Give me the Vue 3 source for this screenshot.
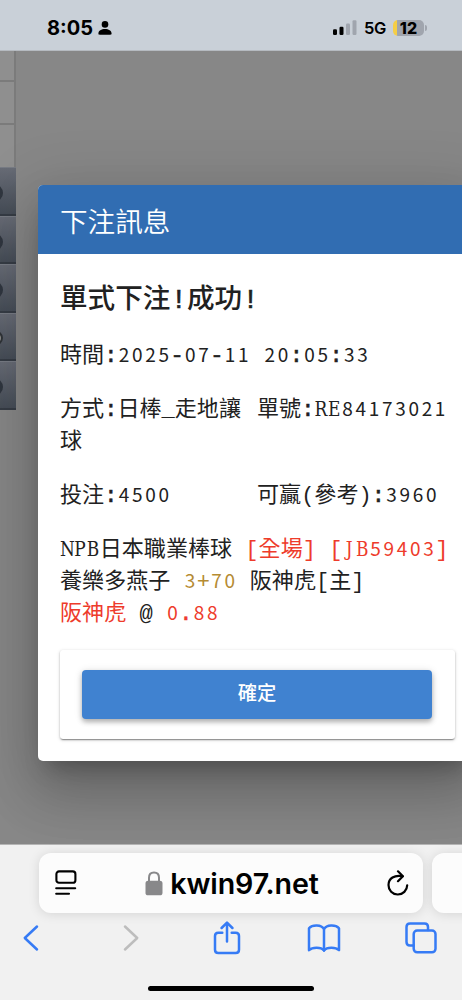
<script setup>
import { h } from 'vue'

const navItems = [0, 1, 2, 3, 4]

// Splits a string into runs so that digits, capitals and marks get their own face.
const Mono = (props) =>
  h('span', { class: 'mono' }, props.t.split(/(\d+|[A-Z]|[:.!-])/).filter(Boolean).map((part) => {
    if (/^\d/.test(part)) return h('span', { class: 'mono-digits' }, part)
    if (/^[A-Z]/.test(part)) return h('span', { class: 'mono-cap' }, part)
    if (/^[:.!-]/.test(part)) return h('span', { class: 'mono-mark' }, part)
    return part
  }))
Mono.props = ['t']
</script>

<template>
  <div class="screen">
    <header class="status">
      <div class="clock">
        <span>8:05</span>
        <svg width="14" height="14" viewBox="0 0 14 14"><circle cx="7" cy="3.4" r="3.3" /><path d="M0.4 12.6C0.4 9.6 3.4 8 7 8s6.6 1.6 6.6 4.6c0 .8-.5 1.2-1.3 1.2H1.700c-.8 0-1.3-.4-1.3-1.200z" /></svg>
      </div>
      <div class="signals">
        <svg class="bars" width="24" height="16" viewBox="0 0 24 16">
          <rect x="0" y="9.3" width="4" height="5.7" rx="1.2" /><rect x="6.5" y="6.8" width="4" height="8.2" rx="1.2" />
          <g fill="#a0a5ae"><rect x="13" y="3.5" width="4" height="11.5" rx="1.2" /><rect x="19.5" y="0.3" width="4" height="14.7" rx="1.2" /></g>
        </svg>
        <span class="net">5G</span>
        <span class="battery">12</span>
        <i class="nub"></i>
      </div>
    </header>

    <main class="page">
      <aside class="side">
        <div class="cell first"></div>
        <div class="cell"></div>
        <div class="cell"></div>
        <div v-for="n in navItems" :key="n" class="nav" :class="{ lit: n === 3 }"><i></i></div>
      </aside>

      <section class="dialog">
        <h1 class="title">下注訊息</h1>
        <div class="body">
          <h2><Mono t="單式下注!成功!" /></h2>
          <div class="row"><p><Mono t="時間:2025-07-11 20:05:33" /></p></div>
          <div class="row cols">
            <p><Mono t="方式:日棒_走地讓" /><Mono t="球" /></p>
            <p><Mono t="單號:RE84173021" /></p>
          </div>
          <div class="row cols">
            <p><Mono t="投注:4500" /></p>
            <p><Mono t="可贏(參考):3960" /></p>
          </div>
          <div class="row bet">
            <p><Mono t="NPB日本職業棒球 " /><Mono class="red" t="[全場] [JB59403]" /></p>
            <p><Mono t="養樂多燕子 " /><Mono class="gold" t="3+70" /><Mono t=" 阪神虎[主]" /></p>
            <p><Mono class="red" t="阪神虎" /><Mono t=" @ " /><Mono class="red" t="0.88" /></p>
          </div>
          <div class="card"><button>確定</button></div>
        </div>
      </section>
    </main>

    <footer class="browser">
      <div class="tabs">
        <div class="address">
          <svg class="reader" width="22" height="26" viewBox="0 0 22 26" fill="none" stroke="#000" stroke-width="2.1" stroke-linecap="round"><rect x="1.4" y="1.4" width="19" height="11.4" rx="2.6" /><path d="M1.2 18.2H20.2M1.2 23.7H14" /></svg>
          <div class="host">
            <svg width="18" height="25" viewBox="0 0 18 25"><rect x="0.5" y="9.8" width="17" height="14.5" rx="2.6" fill="#88888a" /><path d="M4 11V6.8C4 3.6 6 1.5 9 1.5s5 2.1 5 5.3V11" fill="none" stroke="#88888a" stroke-width="2" /></svg>
            <span>kwin97.net</span>
          </div>
          <svg class="reload" width="22" height="26" viewBox="0 0 22 26" fill="none" stroke="#000" stroke-width="2.2" stroke-linecap="round" stroke-linejoin="round"><path d="M15.500 6.200C7.500 4.500 1.500 8.500 1.500 15A9.300 9.300 0 0 0 20.200 15.300" /><path d="M11 1.300L15.900 6.200L11 11.200" /></svg>
        </div>
        <div class="next-tab"></div>
      </div>
      <nav class="tools">
        <svg class="back" width="16" height="28" viewBox="0 0 16 28"><path d="M14 2.5L1.8 14L14 25.5" /></svg>
        <svg class="off" width="16" height="28" viewBox="0 0 16 28"><path d="M2 2.5L14.2 14L2 25.5" /></svg>
        <svg class="share" width="28" height="34" viewBox="0 0 28 34"><path d="M9.3 11.8H5.3Q2 11.8 2 15.1V28.7Q2 32 5.3 32H22.7Q26 32 26 28.7V15.1Q26 11.8 22.7 11.8H18.7M14 20.5V1.8M8.6 7L14 1.6L19.4 7" /></svg>
        <svg class="book" width="34" height="29" viewBox="0 0 34 29"><path d="M17 5C14.5 .6 5.500 .2 2 4.300V26.200C5.500 22.800 14 22.800 17 26.500C20 22.800 28.500 22.800 32 26.200V4.300C28.500 .2 19.500 .6 17 5Z" /><path d="M17 5V26.500" /></svg>
        <svg width="32" height="32" viewBox="0 0 32 32"><path d="M8.500 23.500H5Q1.500 23.500 1.500 20V5Q1.500 1.500 5 1.500H19.500Q23 1.500 23 5V8" /><rect x="8.700" y="8.500" width="21.800" height="21.800" rx="3.500" /></svg>
      </nav>
      <div class="home"></div>
    </footer>
  </div>
</template>

<style>
body { margin: 0; }
.mono { white-space: pre-wrap; }
.mono-digits { font-family: "Noto Sans CJK TC", sans-serif; font-size: 19px; line-height: 1; letter-spacing: 2.7px; position: relative; left: 1.3px; }
.mono-cap { display: inline-block; width: 13.24px; line-height: 20px; font-family: "DejaVu Serif", serif; font-size: 17px; text-align: center; transform: scaleY(1.17); transform-origin: 50% 80%; }
.mono-mark { -webkit-text-stroke: .6px currentColor; }
</style>

<style scoped>
* { box-sizing: border-box; }
.screen { width: 462px; height: 1000px; overflow: hidden; display: flex; flex-direction: column; font-family: Inter, "Noto Sans CJK TC", sans-serif; color: #212121; }
.status { height: 51px; flex: none; display: flex; justify-content: space-between; padding: 17px 35px 0 47px; background: #c9d0d8; border-bottom: 1px solid #b5bac0; color: #000; }
.clock, .signals { display: flex; align-items: center; height: 21px; }
.clock { font-size: 20px; font-weight: 700; gap: 5px; }
.bars { margin-right: 7px; }
.net { font-size: 16.5px; font-weight: 600; width: 22px; margin-right: 7px; letter-spacing: -.3px; }
.battery { width: 31px; height: 16px; border-radius: 5px; background: linear-gradient(90deg, #f5ce46 4px, #a0a5ae 4px); font-size: 16px; line-height: 16px; font-weight: 800; text-align: center; }
.nub { width: 2px; height: 6px; margin-left: 1px; border-radius: 0 2px 2px 0; background: #a0a5ae; }
.page { height: 793px; flex: none; display: flex; align-items: flex-start; background: #878787; overflow: hidden; }
.side { width: 16px; flex: none; overflow: hidden; }
.cell { height: 43px; background: #8f8f8f; border-right: 2px solid #7b7b7b; border-bottom: 2px solid #7b7b7b; }
.cell.first { height: 31px; }
.cell:nth-child(3) { height: 42px; border-bottom: 0; }
.nav { height: 48.6px; padding-top: 16px; background: linear-gradient(#676b75, #464d57); border-bottom: 2px solid #363c45; border-top: 1px solid #777b84; }
.nav i { display: block; width: 18px; height: 18px; margin-left: -15px; border-radius: 50%; background: #30363f; }
.nav.lit i { border: 2px solid #2f3337; background: #8b8b88; height: 16px; }
.dialog { width: 439px; height: 576px; flex: none; margin: 134px 0 0 22px; background: #fff; border-radius: 5px; overflow: hidden; box-shadow: 0 15px 21px -10px rgba(0,0,0,.25), 0 33px 52px 4px rgba(0,0,0,.16), 0 12px 63px 10px rgba(0,0,0,.13); }
.title { height: 69px; margin: 0; padding-left: 22px; background: #316db2; color: #fff; font: 350 27.6px/70px "Noto Sans CJK TC", sans-serif; }
.body { padding: 25px 22px 22px; }
h2, p { font-family: "Liberation Mono", "Noto Sans CJK TC", monospace; }
h2 { margin: 0 0 18px; font-size: 27.6px; font-weight: 500; line-height: 44px; }
p { margin: 0; font-size: 22.07px; line-height: 32px; }
.row { width: 395px; margin-bottom: 22px; }
.cols { display: grid; grid-template-columns: 197px 198px; }
.bet { margin-bottom: 19px; white-space: nowrap; }
.red { color: #ee3b2b; }
.gold { color: #b58b32; }
.card { width: 395px; height: 89px; padding: 20px 22px; border-radius: 3px; box-shadow: 0 2px 1px -1px rgba(0,0,0,.25), 0 1px 2px rgba(0,0,0,.25), 0 1px 4px rgba(0,0,0,.12); }
button { display: block; width: 350px; height: 49px; padding: 0 0 4px; border: 0; border-radius: 4px; background: #4082d0; color: #fff; font: 500 19.300px/45px "Noto Sans CJK TC", sans-serif; box-shadow: 0 3px 5px rgba(0,0,0,.26), 0 1px 8px rgba(0,0,0,.12); }
.browser { height: 156px; background: #f1f1f1; border-top: 1px solid #b5b5b5; color: #000; }
.tabs { display: flex; gap: 9px; padding: 8px 0 0 39px; }
.address, .next-tab { height: 60px; flex: none; background: #fcfcfc; border-radius: 12px; box-shadow: 0 1px 12px rgba(0,0,0,.12); }
.address { width: 384px; display: flex; align-items: center; justify-content: space-between; padding: 0 14px 0 16px; }
.next-tab { width: 60px; }
.reader, .reload { flex: none; }
.host { display: flex; align-items: center; gap: 7px; font-size: 28.6px; font-weight: 600; letter-spacing: -.1px; }
.tools { display: flex; align-items: center; height: 34px; margin-top: 8px; padding-left: 23px; }
.back { margin-right: 84px; }
.off { margin-right: 74px; }
.share { margin-right: 66px; }
.book { margin-right: 64px; }
.tools svg { fill: none; stroke: #367bf5; stroke-width: 2.500; stroke-linecap: round; stroke-linejoin: round; }
.tools .off { stroke: #bdbdbd; }
.home { width: 166px; height: 5px; margin: 31px auto 0; border-radius: 3px; background: #000; }
</style>
